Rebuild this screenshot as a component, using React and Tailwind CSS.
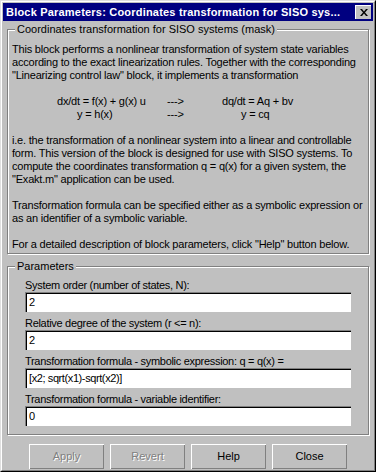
import React from 'react';

function GroupBox({ label, className = '', children }) {
  return (
    <fieldset
      className={`border border-[#808080] shadow-[1px_1px_0_#ffffff,inset_1px_1px_0_#ffffff] ${className}`}
    >
      <legend className="ml-[7px] px-[2px] leading-[13px] bg-[#c0c0c0]">{label}</legend>
      {children}
    </fieldset>
  );
}

function Field({ label, value }) {
  return (
    <div className="mb-[5px]">
      <div className="leading-[13px] h-[13px] whitespace-nowrap tracking-[-0.3px]">{label}</div>
      <div className="h-[20px] bg-white border-t border-l border-[#808080] border-r-white border-b-white">
        <div className="h-full border-t border-l border-black border-r-[#dfdfdf] border-b-[#dfdfdf] pl-[2px] leading-[17px] tracking-[-0.4px]">
          {value}
        </div>
      </div>
    </div>
  );
}

function Button({ children, disabled }) {
  return (
    <div className="w-[75px] h-[25px] border-t border-l border-white border-r-black border-b-black">
      <div
        className={`h-full flex items-center justify-center border-r border-b border-[#808080] ${
          disabled ? 'text-[#808080] [text-shadow:1px_1px_0_#ffffff]' : 'text-black'
        }`}
      >
        {children}
      </div>
    </div>
  );
}

const lines = [
  'This block performs a nonlinear transformation of system state variables',
  'according to the exact linearization rules. Together with the corresponding',
  '"Linearizing control law" block, it implements a transformation',
];

const lines2 = [
  'i.e. the transformation of a nonlinear system into a linear and controllable',
  'form. This version of the block is designed for use with SISO systems. To',
  'compute the coordinates transformation q = q(x) for a given system, the',
  '"Exakt.m" application can be used.',
];

const lines3 = [
  'Transformation formula can be specified either as a symbolic expression or',
  'as an identifier of a symbolic variable.',
];

export default function App() {
  return (
    <div className="w-[376px] h-[472px] bg-[#c0c0c0] text-black text-[11px] font-['Liberation_Sans',Arial,sans-serif] border border-t-[#dfdfdf] border-l-[#dfdfdf] border-r-black border-b-black">
      <div className="h-full border border-white border-r-[#808080] border-b-[#808080] p-px flex flex-col">
        <div className="h-[18px] bg-[#000080] flex items-center justify-between pl-[3px] pr-[2px]">
          <span className="text-white font-bold text-[11px] tracking-[0.2px] whitespace-nowrap">
            Block Parameters: Coordinates transformation for SISO sys...
          </span>
          <div className="w-[16px] h-[14px] bg-[#c0c0c0] border-t border-l border-white border-r-black border-b-black flex items-center justify-center">
            <svg width="8" height="7" viewBox="0 0 8 7">
              <path d="M0 0h2l2 2.5L6 0h2L5 3.5 8 7H6L4 4.5 2 7H0l3-3.5z" fill="#000" />
            </svg>
          </div>
        </div>

        <div className="px-[4px] pt-[2px]">
          <GroupBox label="Coordinates transformation for SISO systems (mask)" className="h-[231px]">
            <div className="pl-[4px] pt-[7px] leading-[13px] whitespace-nowrap tracking-[-0.2px]">
              {lines.map((t) => (
                <div key={t}>{t}</div>
              ))}
              <div className="h-[13px]" />
              <div className="flex whitespace-pre">
                <span className="w-[155px] pl-[45px]">dx/dt = f(x) + g(x) u</span>
                <span className="w-[55px]">---&gt;</span>
                <span>dq/dt = Aq + bv</span>
              </div>
              <div className="flex whitespace-pre">
                <span className="w-[155px] pl-[65px]">y = h(x)</span>
                <span className="w-[55px]">---&gt;</span>
                <span className="pl-[19px]">y = cq</span>
              </div>
              <div className="h-[13px]" />
              {lines2.map((t) => (
                <div key={t}>{t}</div>
              ))}
              <div className="h-[13px]" />
              {lines3.map((t) => (
                <div key={t}>{t}</div>
              ))}
              <div className="h-[13px]" />
              <div>For a detailed description of block parameters, click "Help" button below.</div>
            </div>
          </GroupBox>

          <GroupBox label="Parameters" className="mt-[6px] h-[175px]">
            <div className="pl-[17px] pr-[17px] pt-[6px]">
              <Field label="System order (number of states, N):" value="2" />
              <Field label="Relative degree of the system (r <= n):" value="2" />
              <Field label="Transformation formula - symbolic expression: q = q(x) =" value="[x2; sqrt(x1)-sqrt(x2)]" />
              <Field label="Transformation formula - variable identifier:" value="0" />
            </div>
          </GroupBox>
        </div>

        <div className="flex justify-center gap-[6px] mt-[9px]">
          <Button disabled>Apply</Button>
          <Button disabled>Revert</Button>
          <Button>Help</Button>
          <Button>Close</Button>
        </div>
      </div>
    </div>
  );
}
